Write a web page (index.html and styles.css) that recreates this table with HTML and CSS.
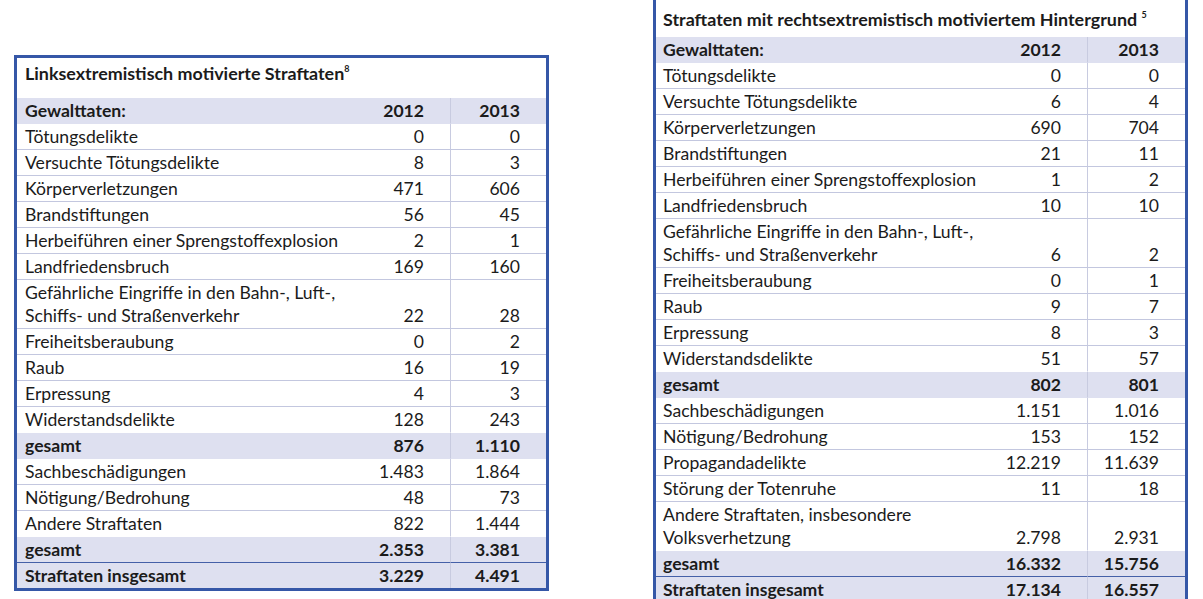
FILE: index.html
```html
<!DOCTYPE html>
<html lang="de">
<head>
<meta charset="utf-8">
<link rel="stylesheet" href="styles.css">
</head>
<body>
<div class="page">
  <div class="panel panel-left">
    <table class="stats stats-left">
      <colgroup><col class="c-label-l"><col class="c-num"><col class="c-num"></colgroup>
      <tr class="title"><td colspan="3">Linksextremistisch motivierte Straftaten<sup>8</sup></td></tr>
      <tr class="head"><td>Gewalttaten:</td><td class="n">2012</td><td class="n d">2013</td></tr>
      <tr><td>Tötungsdelikte</td><td class="n">0</td><td class="n d">0</td></tr>
      <tr><td>Versuchte Tötungsdelikte</td><td class="n">8</td><td class="n d">3</td></tr>
      <tr><td>Körperverletzungen</td><td class="n">471</td><td class="n d">606</td></tr>
      <tr><td>Brandstiftungen</td><td class="n">56</td><td class="n d">45</td></tr>
      <tr><td>Herbeiführen einer Sprengstoffexplosion</td><td class="n">2</td><td class="n d">1</td></tr>
      <tr><td>Landfriedensbruch</td><td class="n">169</td><td class="n d">160</td></tr>
      <tr><td>Gefährliche Eingriffe in den Bahn-, Luft-,<br>Schiffs- und Straßenverkehr</td><td class="n">22</td><td class="n d">28</td></tr>
      <tr><td>Freiheitsberaubung</td><td class="n">0</td><td class="n d">2</td></tr>
      <tr><td>Raub</td><td class="n">16</td><td class="n d">19</td></tr>
      <tr><td>Erpressung</td><td class="n">4</td><td class="n d">3</td></tr>
      <tr class="pre"><td>Widerstandsdelikte</td><td class="n">128</td><td class="n d">243</td></tr>
      <tr class="sum"><td>gesamt</td><td class="n">876</td><td class="n d">1.110</td></tr>
      <tr><td>Sachbeschädigungen</td><td class="n">1.483</td><td class="n d">1.864</td></tr>
      <tr><td>Nötigung/Bedrohung</td><td class="n">48</td><td class="n d">73</td></tr>
      <tr class="pre"><td>Andere Straftaten</td><td class="n">822</td><td class="n d">1.444</td></tr>
      <tr class="sum sum-before-total"><td>gesamt</td><td class="n">2.353</td><td class="n d">3.381</td></tr>
      <tr class="sum total"><td>Straftaten insgesamt</td><td class="n">3.229</td><td class="n d">4.491</td></tr>
    </table>
  </div>
  <div class="panel panel-right">
    <table class="stats stats-right">
      <colgroup><col class="c-label-r"><col class="c-num-r"><col class="c-num-r"></colgroup>
      <tr class="title"><td colspan="3">Straftaten mit rechtsextremistisch motiviertem Hintergrund <sup>5</sup></td></tr>
      <tr class="head"><td>Gewalttaten:</td><td class="n">2012</td><td class="n d">2013</td></tr>
      <tr><td>Tötungsdelikte</td><td class="n">0</td><td class="n d">0</td></tr>
      <tr><td>Versuchte Tötungsdelikte</td><td class="n">6</td><td class="n d">4</td></tr>
      <tr><td>Körperverletzungen</td><td class="n">690</td><td class="n d">704</td></tr>
      <tr><td>Brandstiftungen</td><td class="n">21</td><td class="n d">11</td></tr>
      <tr><td>Herbeiführen einer Sprengstoffexplosion</td><td class="n">1</td><td class="n d">2</td></tr>
      <tr><td>Landfriedensbruch</td><td class="n">10</td><td class="n d">10</td></tr>
      <tr><td>Gefährliche Eingriffe in den Bahn-, Luft-,<br>Schiffs- und Straßenverkehr</td><td class="n">6</td><td class="n d">2</td></tr>
      <tr><td>Freiheitsberaubung</td><td class="n">0</td><td class="n d">1</td></tr>
      <tr><td>Raub</td><td class="n">9</td><td class="n d">7</td></tr>
      <tr><td>Erpressung</td><td class="n">8</td><td class="n d">3</td></tr>
      <tr class="pre"><td>Widerstandsdelikte</td><td class="n">51</td><td class="n d">57</td></tr>
      <tr class="sum"><td>gesamt</td><td class="n">802</td><td class="n d">801</td></tr>
      <tr><td>Sachbeschädigungen</td><td class="n">1.151</td><td class="n d">1.016</td></tr>
      <tr><td>Nötigung/Bedrohung</td><td class="n">153</td><td class="n d">152</td></tr>
      <tr><td>Propagandadelikte</td><td class="n">12.219</td><td class="n d">11.639</td></tr>
      <tr><td>Störung der Totenruhe</td><td class="n">11</td><td class="n d">18</td></tr>
      <tr class="pre"><td>Andere Straftaten, insbesondere<br>Volksverhetzung</td><td class="n">2.798</td><td class="n d">2.931</td></tr>
      <tr class="sum sum-before-total"><td>gesamt</td><td class="n">16.332</td><td class="n d">15.756</td></tr>
      <tr class="sum total"><td>Straftaten insgesamt</td><td class="n">17.134</td><td class="n d">16.557</td></tr>
    </table>
  </div>
</div>
</body>
</html>
```

FILE: styles.css
```css
html, body {
  margin: 0;
  padding: 0;
  background: #ffffff;
}
body {
  font-family: Lato, "Noto Sans", sans-serif;
  color: #1b1b1b;
}
.page {
  display: flex;
  align-items: flex-start;
  width: 1203px;
  height: 599px;
  overflow: hidden;
}
.panel-left {
  padding: 55px 0 0 14px;
}
.panel-right {
  margin: -6px 0 0 104px;
}
.stats {
  border: 3px solid #3557a7;
  border-spacing: 0;
  border-collapse: separate;
  table-layout: fixed;
  width: 535px;
  font-size: 17.6px;
}
.c-label-l { width: 337px; }
.c-num { width: 96px; }
.c-label-r { width: 333px; }
.c-num-r { width: 98px; }

.stats td {
  line-height: 23px;
  padding: 1px 0 1px 8px;
  border-bottom: 1px solid #c3c7df;
  vertical-align: bottom;
  white-space: nowrap;
}
.stats-right td {
  padding-left: 7px;
}
.stats td.n {
  text-align: right;
  padding-right: 26px;
  padding-left: 0;
}
.stats td.d {
  border-left: 1px solid #c8cbe0;
}
.stats tr.title td {
  font-weight: 700;
  font-size: 17.9px;
  padding-top: 4px;
  padding-bottom: 13px;
  border-bottom: none;
}
.stats-right tr.title td {
  padding-top: 11px;
  padding-bottom: 6px;
}
.stats sup {
  font-size: 9px;
  line-height: 0;
  vertical-align: 8px;
}
.stats tr.head td {
  background: #dee0f0;
  font-weight: 700;
  border-bottom-color: transparent;
}
.stats tr.pre td {
  border-bottom-color: transparent;
}
.stats tr.sum td {
  background: #dee0f0;
  font-weight: 700;
  border-bottom-color: transparent;
}
.stats tr.sum-before-total td {
  border-bottom-color: #4460a8;
}
.stats tr.total td {
  border-bottom: none;
}
```
